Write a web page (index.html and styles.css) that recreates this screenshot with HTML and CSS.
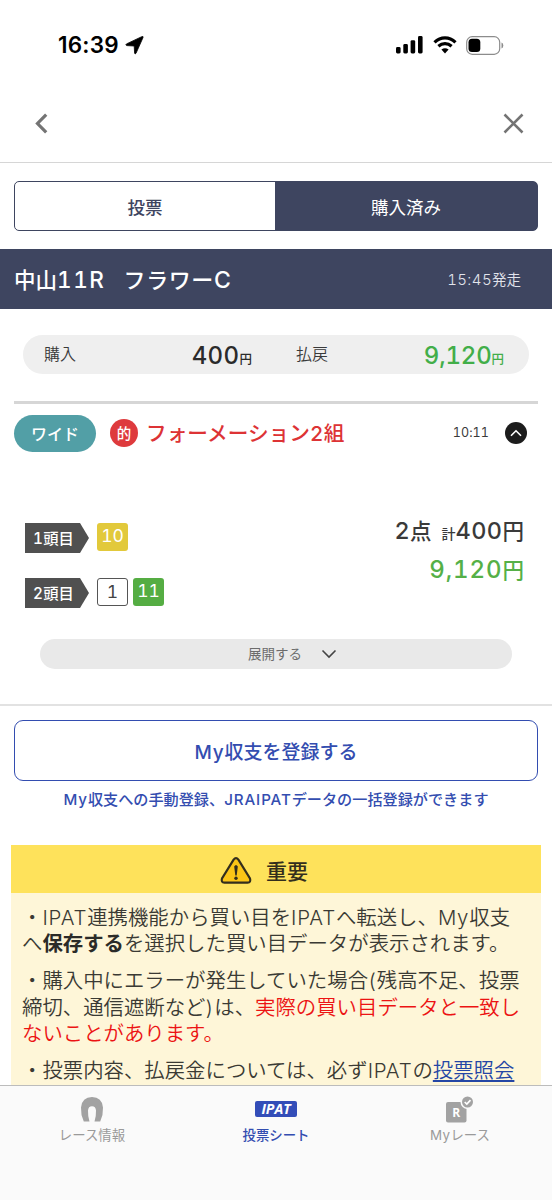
FILE: index.html
```html
<!DOCTYPE html>
<html lang="ja">
<head>
<meta charset="utf-8">
<title>投票シート</title>
<link rel="stylesheet" href="styles.css">
</head>
<body>
<div class="screen">
  <div class="status">
    <span class="time">16:39</span>
    <svg class="loc" width="19" height="19" viewBox="0 0 19 19"><path stroke="#000" stroke-width=".8" d="M18 1.600 11 17.300Q10.300 18.600 9.600 17.200L9.200 10 1.800 9.600Q0 9 1.500 7.900L16.700 .7Q18.700 0 18 1.600Z"/></svg>
    <svg class="signal" width="27" height="18" viewBox="0 0 27 18"><rect x="0" y="11" width="4.6" height="6.5" rx="1.4"/><rect x="7.3" y="8" width="4.6" height="9.5" rx="1.4"/><rect x="14.6" y="4.2" width="4.6" height="13.3" rx="1.4"/><rect x="22" y="0" width="4.6" height="17.5" rx="1.4"/></svg>
    <svg class="wifi" width="24" height="18" viewBox="0 0 24 18"><g fill="none" stroke="#000" stroke-width="3.2"><path d="M1.5 6.3Q6.200 1.800 12 1.800T22.500 6.300"/><path d="M5.400 10.200Q8.300 7.700 12 7.700T18.600 10.200"/></g><path d="M8.400 13.600Q12 10.700 15.600 13.600L12 17.400Z"/></svg>
    <svg class="battery" width="38" height="19" viewBox="0 0 38 19"><rect x=".7" y=".7" width="33" height="17.600" rx="5.500" fill="none" stroke="#8c8c8c" stroke-width="1.200"/><rect x="2.500" y="2.700" width="11.800" height="13.400" rx="3.500"/><path d="M35.500 6.500Q37.300 7.200 37.300 9.500T35.500 12.500Z" fill="#8c8c8c"/></svg>
  </div>
  <div class="nav">
    <svg width="13" height="21" viewBox="0 0 13 21"><path d="M11.200 1.700 2.500 10.500 11.200 19.300"/></svg>
    <svg class="close" width="21" height="21" viewBox="0 0 21 21"><path d="M1.500 1.500 19.500 19.500M19.500 1.500 1.500 19.500"/></svg>
  </div>
  <div class="tabs"><div class="tab">投票</div><div class="tab active">購入済み</div></div>
  <div class="race"><span class="race-place">中山<span class="num">11R</span></span><span class="race-name">フラワー<span class="num">C</span></span><span class="start"><span class="num">15:45</span>発走</span></div>
  <div class="summary">
    <span class="label">購入</span><span class="amount"><span class="num">400</span><small>円</small></span>
    <span class="label second">払戻</span><span class="amount green"><span class="num">9,120</span><small>円</small></span>
  </div>
  <div class="bet-head">
    <span class="kind">ワイド</span><span class="hit">的</span><span class="bet-title">フォーメーション<span class="num">2</span>組</span>
    <span class="bet-time">10:11</span>
    <svg width="22" height="22" viewBox="0 0 22 22"><circle cx="11" cy="11" r="11" fill="#1c1c1c"/><path d="M6 13.800 11 8.800 16 13.800" fill="none" stroke="#fff" stroke-width="1.600"/></svg>
  </div>
  <div class="bet">
    <div class="legs">
      <div class="leg"><span class="tag"><span class="num">1</span>頭目</span><span class="horse yellow">10</span></div>
      <div class="leg"><span class="tag"><span class="num">2</span>頭目</span><span class="horse white">1</span><span class="horse lime">11</span></div>
    </div>
    <div class="totals">
      <div><span class="num">2</span>点<small>計</small><span class="num">400</span>円</div>
      <div class="win"><span class="num">9,120</span>円</div>
    </div>
  </div>
  <div class="expand">展開する<svg width="16" height="10" viewBox="0 0 16 10"><path d="M1.500 1.500 8 8 14.500 1.500"/></svg></div>
  <div class="register">
    <div class="button"><span class="num">My</span>収支を登録する</div>
    <div class="hint"><span class="num">My</span>収支への手動登録、<span class="num">JRAIPAT</span>データの一括登録ができます</div>
  </div>
  <div class="notice">
    <div class="notice-head">
      <svg width="32" height="27" viewBox="0 0 32 27"><path d="M13.600 2.600Q16 -.4 18.400 2.600L30 21.500Q31.300 25.400 27.500 25.700H4.500Q.7 25.400 2 21.500Z" fill="#fbc516" stroke="#332e1d" stroke-width="2.200"/><path d="M14.200 9.500Q16 6.500 17.800 9.500L16.700 18.500H15.300Z" fill="#332e1d"/><circle cx="16" cy="21.300" r="1.700" fill="#332e1d"/></svg>
      <span>重要</span>
    </div>
    <div class="notice-body">
      <p>・<span class="num">IPAT</span>連携機能から買い目を<span class="num">IPAT</span>へ転送し、<span class="num">My</span>収支<br>へ<b>保存する</b>を選択した買い目データが表示されます。</p>
      <p>・購入中にエラーが発生していた場合<span class="num">(</span>残高不足、投票<br>締切、通信遮断など<span class="num">)</span>は、<em>実際の買い目データと一致し<br>ないことがあります。</em></p>
      <p>・投票内容、払戻金については、必ず<span class="num">IPAT</span>の<a>投票照会</a></p>
    </div>
  </div>
  <div class="bottom">
    <div class="item"><svg width="24" height="27" viewBox="0 0 24 27"><path d="M3.800 25.500Q.6 18.500 1 11.500Q2 1 12 1T23 11.500Q23.400 18.500 20.200 25.500H14.500Q16.200 20.500 16 14.500Q15.700 10.200 12 10.200T8 14.500Q7.800 20.500 9.500 25.500Z" fill="#a2a2a2"/></svg><span>レース情報</span></div>
    <div class="item on"><span class="ipat">IPAT</span><span>投票シート</span></div>
    <div class="item"><svg width="36" height="27" viewBox="-2 0 36 27"><rect x="2" y="6" width="20.500" height="20.500" rx="2" fill="#a2a2a2"/><circle cx="23.500" cy="6" r="7" fill="#fafafa"/><circle cx="23.500" cy="6" r="5.500" fill="#a2a2a2"/><path d="M20.700 6 22.800 8 26.500 4.200" fill="none" stroke="#fff" stroke-width="1.700"/><text x="12.200" y="20.500" text-anchor="middle" class="r">R</text></svg><span><span class="num">My</span>レース</span></div>
  </div>
</div>
</body>
</html>
```
FILE: styles.css
```css
* { box-sizing: border-box; }
body { margin: 0; background: #fff; color: #3a3a3a; font-family: "Noto Sans CJK JP", sans-serif; }
svg { display: block; flex: none; }
.num { font-family: Inter, "Noto Sans CJK JP", sans-serif; line-height: 0; letter-spacing: .4px; font-feature-settings: "tnum"; }
.screen { width: 552px; height: 1200px; overflow: hidden; display: flex; flex-direction: column; white-space: nowrap; }
.screen > div { flex: none; }

.status { height: 90px; padding: 0 48px 0 58px; display: flex; align-items: center; color: #000; }
.time { font: 600 22.500px/28px Inter, sans-serif; letter-spacing: .2px; }
.loc { margin-left: 6px; }
.signal { margin-left: auto; }
.wifi { margin-left: 10px; }
.battery { margin-left: 9px; }

.nav { height: 73px; padding: 0 28px 5px 35px; display: flex; align-items: center; justify-content: space-between; border-bottom: 1px solid #d6d6d6; }
.nav path { fill: none; stroke: #747474; stroke-width: 3.200; }
.nav .close path { stroke-width: 2.600; }

.tabs { margin: 18px 14px 0; height: 50px; display: flex; border: 1.500px solid #3e4560; border-radius: 5px; background: linear-gradient(90deg, #fff 50%, #3e4560 50%); overflow: hidden; font-size: 17.500px; line-height: 50px; }
.tab { flex: 0 0 260px; text-align: center; font-weight: 500; color: #3e4560; }
.tab.active { flex: 1; background: #3e4560; color: #fff; font-weight: 400; }

.race { margin-top: 18px; height: 60px; padding: 0 31px 2px 14px; display: flex; align-items: center; background: #3e4560; color: #fff; font-size: 21.500px; font-weight: 500; }
.race-place .num { font-size: 22.500px; letter-spacing: 1.600px; }
.race-name { margin-left: 18px; font-size: 22px; letter-spacing: .6px; }
.race-name .num { font-size: 23px; }
.start { margin-left: auto; font-size: 14.500px; font-weight: 350; color: #e2e4ec; }
.start .num { font-size: 15px; }

.summary { margin: 26px 23px 0; height: 39px; padding: 0 24px 3px 21px; display: flex; align-items: center; border-radius: 20px; background: #efefef; font-size: 16px; }
.label { font-weight: 350; }
.amount { width: 176px; text-align: right; font-size: 24px; font-weight: 500; color: #2b2b2b; }
.amount small { font-size: 12.500px; }
.second { margin-left: 44px; }
.green { color: #42ae49; }
.green .num { letter-spacing: -.2px; }

.bet-head { margin: 27px 14px 0; height: 61px; padding-right: 11px; display: flex; align-items: center; border-top: 3px solid #d6d6d6; }
.kind { width: 82px; height: 37px; border-radius: 19px; background: #529fa6; color: #fff; font-size: 16px; font-weight: 500; line-height: 36px; text-align: center; }
.hit { margin-left: 14px; width: 28px; height: 28px; border-radius: 50%; background: #de3a3d; color: #fff; font-size: 14.500px; font-weight: 500; line-height: 27px; text-align: center; }
.bet-title { margin-left: 8px; margin-top: -3px; color: #dd3335; font-size: 20.650px; font-weight: 500; line-height: 30px; }
.bet-time { margin-left: auto; margin-right: 16px; font: 400 12.500px/20px Inter, sans-serif; font-feature-settings: "tnum"; letter-spacing: .1px; }

.bet { height: 177px; padding: 61px 28px 0 25px; display: flex; justify-content: space-between; }
.leg { display: flex; gap: 5px; height: 55px; }
.tag { width: 64px; height: 30px; margin-right: 3px; padding-left: 8px; background: #505050; clip-path: polygon(0 0, 55px 0, 100% 50%, 55px 100%, 0 100%); color: #fff; font-size: 15.300px; font-weight: 500; line-height: 29px; }
.horse { width: 31px; height: 28px; border-radius: 3px; color: #fff; font: 400 17.500px/26px Inter, sans-serif; font-feature-settings: "tnum"; text-align: center; }
.yellow { background: #e2c93b; }
.white { border: 1px solid #555; color: #444; }
.lime { background: #55ad43; }
.totals { font-size: 21.500px; font-weight: 500; line-height: 38px; text-align: right; margin-top: -12px; }
.totals .num { font-size: 23.500px; }
.totals small { margin-left: 10px; font-size: 14px; }
.win { margin-top: -2px; color: #55b047; }
.totals .win .num { font-size: 24px; letter-spacing: .9px; }

.expand { margin: 0 40px; height: 30px; border-radius: 15px; background: #e9e9e9; display: flex; align-items: center; padding: 0 0 3px 208px; font-size: 13.500px; color: #6c6c6c; }
.expand svg { margin: 3px 0 0 19px; }
.expand path { fill: none; stroke: #444; stroke-width: 1.600; }

.register { margin-top: 35px; padding: 14px 14px 0; border-top: 2px solid #e2e2e2; height: 141px; color: #334db0; text-align: center; font-weight: 500; }
.button { height: 61px; border: 1.500px solid #334db0; border-radius: 9px; font-size: 19px; line-height: 60px; }
.hint { font-size: 15.150px; line-height: 35px; }
.register .num { letter-spacing: .9px; }

.notice { margin: 0 11px; height: 240px; overflow: hidden; background: #fef6d8; }
.notice-head { height: 48px; background: #fee25b; display: flex; align-items: center; justify-content: center; gap: 14px; padding-right: 24px; font-size: 21px; font-weight: 500; color: #332e1d; }
.notice-head svg { margin-top: 2px; }
.notice-head span { line-height: 40px; padding-top: 1px; }
.notice-body { padding: 10px 11px 0; font-size: 20.400px; font-weight: 350; line-height: 26.200px; color: #3a3a34; }
.notice-body .num { letter-spacing: .8px; font-weight: 300; }
.notice-body p { margin: 0 0 11px; }
.notice-body b { font-weight: 700; color: #2b2b28; }
.notice-body em { font-style: normal; color: #ec1313; }
.notice-body a { color: #2446a5; text-decoration: underline; text-underline-offset: 2px; }

.bottom { height: 115px; display: grid; grid-template-columns: repeat(3, 1fr); border-top: 1px solid #bcbcbc; background: #fafafa; color: #9a9a9a; font-size: 13.400px; }
.item { display: flex; flex-direction: column; align-items: center; padding-top: 10px; line-height: 23px; }
.on { color: #334db0; font-weight: 500; }
.ipat { width: 42px; height: 16px; margin: 5px 0 6px; border-radius: 2px; background: #334db8; color: #fff; font: italic 700 14px/16px "Open Sans", sans-serif; text-align: center; }
.r { font: 700 12px "Open Sans", sans-serif; fill: #fff; }
```
